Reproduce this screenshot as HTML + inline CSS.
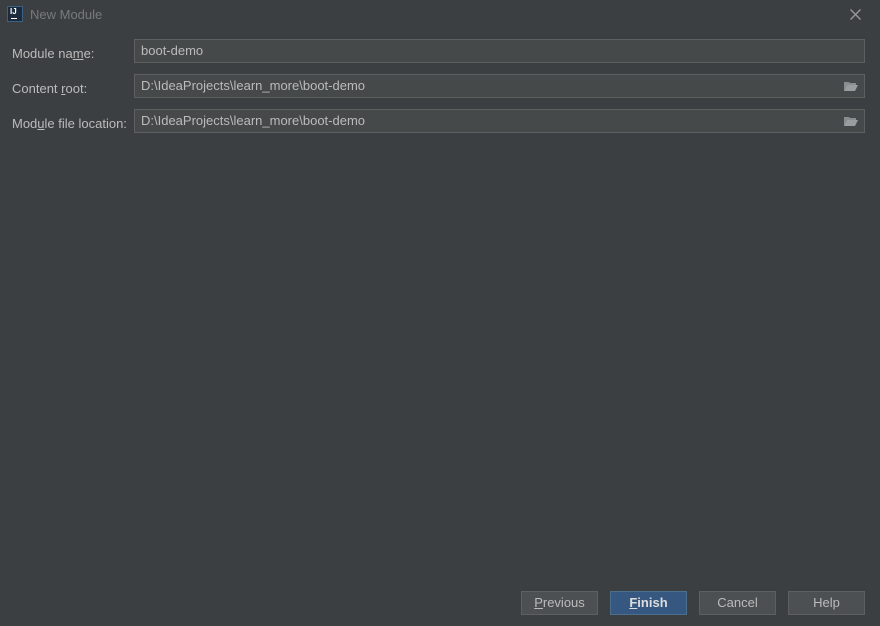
<!DOCTYPE html>
<html><head><style>
body{margin:0;width:880px;height:626px;background:#3c3f41;font-family:"Liberation Sans",sans-serif;font-size:13px;color:#bbbbbb;position:relative;overflow:hidden}
.a{position:absolute}
.f{position:absolute;left:134px;background:#45494a;border:1px solid #5e6060;line-height:22px;padding-left:6px;box-sizing:border-box;width:731px;height:24px}
.b{position:absolute;top:591px;width:77px;height:24px;box-sizing:border-box;border:1px solid #5e6060;background:#4c5052;text-align:center;line-height:22px;color:#bbbbbb}
.fo{position:absolute;right:6px;top:6px;width:14px;height:10px}
</style></head><body>
<div class="a" style="left:7px;top:6px;width:16px;height:16px;background:#1d2b3d;border:1px solid #3d6185;box-sizing:border-box"><div style="position:absolute;left:2px;top:1px;font-size:8px;font-weight:bold;color:#fff;line-height:8px">IJ</div><div style="position:absolute;left:3px;top:11px;width:6px;height:1px;background:#fff"></div></div>
<div class="a" style="left:30px;top:7px;color:#777a7c">New Module</div>
<svg class="a" style="left:850px;top:9px" width="11" height="11" viewBox="0 0 11 11"><path d="M0.5 0.5L10.5 10.5M10.5 0.5L0.5 10.5" stroke="#9a9a9a" stroke-width="1.3"/></svg>
<div class="a" style="left:12px;top:46px">Module na<u>m</u>e:</div>
<div class="a" style="left:12px;top:81px">Content <u>r</u>oot:</div>
<div class="a" style="left:12px;top:116px">Mod<u>u</u>le file location:</div>
<div class="f" style="top:39px">boot-demo</div>
<div class="f" style="top:74px">D:\IdeaProjects\learn_more\boot-demo<svg class="fo" viewBox="0 0 14 10"><path d="M0 1h5l1 1h6v2H3L0 10z" fill="#8a8d8f"/><path d="M3 4h11l-3 6H0z" fill="#9a9d9f"/></svg></div>
<div class="f" style="top:109px">D:\IdeaProjects\learn_more\boot-demo<svg class="fo" viewBox="0 0 14 10"><path d="M0 1h5l1 1h6v2H3L0 10z" fill="#8a8d8f"/><path d="M3 4h11l-3 6H0z" fill="#9a9d9f"/></svg></div>
<div class="b" style="left:521px"><u>P</u>revious</div>
<div class="b" style="left:610px;background:#365880;border-color:#4c708c;font-weight:bold;color:#dddddd"><u>F</u>inish</div>
<div class="b" style="left:699px">Cancel</div>
<div class="b" style="left:788px">Help</div>
</body></html>
